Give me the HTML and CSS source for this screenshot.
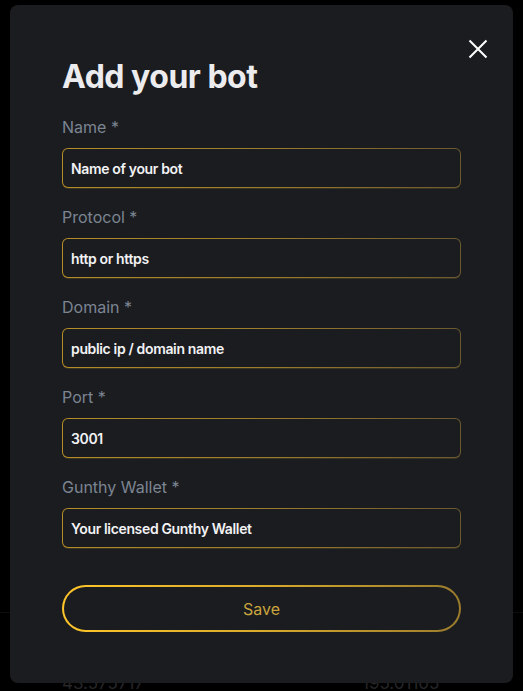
FILE: index.html
```html
<!DOCTYPE html>
<html lang="en">
<head>
<meta charset="utf-8">
<title>Add your bot</title>
<link rel="stylesheet" href="styles.css">
</head>
<body>
<div class="page">
  <div class="table">
    <div class="row row-line"></div>
    <div class="row cells">
      <span class="cell cell-a">43.575717</span>
      <span class="cell cell-b">195.01105</span>
    </div>
  </div>
</div>

<div class="modal">
  <button class="close" aria-label="Close">
    <svg width="20" height="20" viewBox="0 0 20 20"><path d="M1.5 1.5 L18.5 18.5 M18.5 1.5 L1.5 18.5" stroke="#ffffff" stroke-width="2" fill="none"/></svg>
  </button>
  <h1 class="title">Add your bot</h1>
  <form class="form">
    <div class="field">
      <label class="label">Name *</label>
      <div class="input">Name of your bot</div>
    </div>
    <div class="field">
      <label class="label">Protocol *</label>
      <div class="input">http or https</div>
    </div>
    <div class="field">
      <label class="label">Domain *</label>
      <div class="input">public ip / domain name</div>
    </div>
    <div class="field">
      <label class="label">Port *</label>
      <div class="input">3001</div>
    </div>
    <div class="field">
      <label class="label">Gunthy Wallet *</label>
      <div class="input">Your licensed Gunthy Wallet</div>
    </div>
    <div class="save">Save</div>
  </form>
</div>
</body>
</html>
```
FILE: styles.css
```css
* { box-sizing: border-box; }
html, body {
  margin: 0;
  padding: 0;
  background: #000000;
  font-family: Inter, "Noto Sans", "Liberation Sans", sans-serif;
  width: 523px;
  height: 691px;
  overflow: hidden;
}
.page {
  width: 523px;
  height: 691px;
  padding-top: 612px;
}
.row-line {
  height: 1px;
  background: #0d0d0e;
}
.cells {
  display: flex;
  padding-top: 60px;
  font-size: 17px;
  line-height: 20px;
  color: #262628;
}
.cell-a { margin-left: 62px; width: 300px; }

.modal {
  position: absolute;
  left: 10px;
  top: 5px;
  width: 503px;
  height: 678px;
  background: #1b1c20;
  border-radius: 8px;
  padding: 52px 52px 0 52px;
}
.close {
  position: absolute;
  top: 29px;
  right: 20px;
  width: 30px;
  height: 30px;
  padding: 5px;
  background: none;
  border: 0;
  display: flex;
  cursor: pointer;
}
.title {
  margin: 0;
  font-size: 32px;
  line-height: 40px;
  font-weight: 700;
  color: #ececef;
  letter-spacing: -0.5px;
}
.form {
  margin-top: 20px;
  display: flex;
  flex-direction: column;
  gap: 19px;
  width: 399px;
}
.field {
  display: flex;
  flex-direction: column;
  gap: 11px;
}
.label {
  font-size: 16px;
  line-height: 20px;
  color: #7c8592;
}
.input {
  height: 40px;
  border: 1px solid transparent;
  border-radius: 6px;
  background:
    linear-gradient(#1b1c20, #1b1c20) padding-box,
    linear-gradient(90deg, #b58d27 0%, #9a7a2c 55%, #6b5a30 100%) border-box;
  box-shadow: 0 1px 0 -0.5px rgba(200, 160, 50, 0.35);
  padding: 0 8px;
  display: flex;
  align-items: center;
  font-size: 14px;
  font-weight: 600;
  color: #f2f2f4;
  letter-spacing: -0.35px;
}
.save {
  margin-top: 18px;
  height: 47px;
  border: 2px solid transparent;
  border-radius: 24px;
  background:
    linear-gradient(#1b1c20, #1b1c20) padding-box,
    linear-gradient(90deg, #ffc62a 0%, #d9ab2c 50%, #9b7c2c 100%) border-box;
  display: flex;
  align-items: center;
  justify-content: center;
  font-size: 16px;
  color: #c9a43d;
}
```
